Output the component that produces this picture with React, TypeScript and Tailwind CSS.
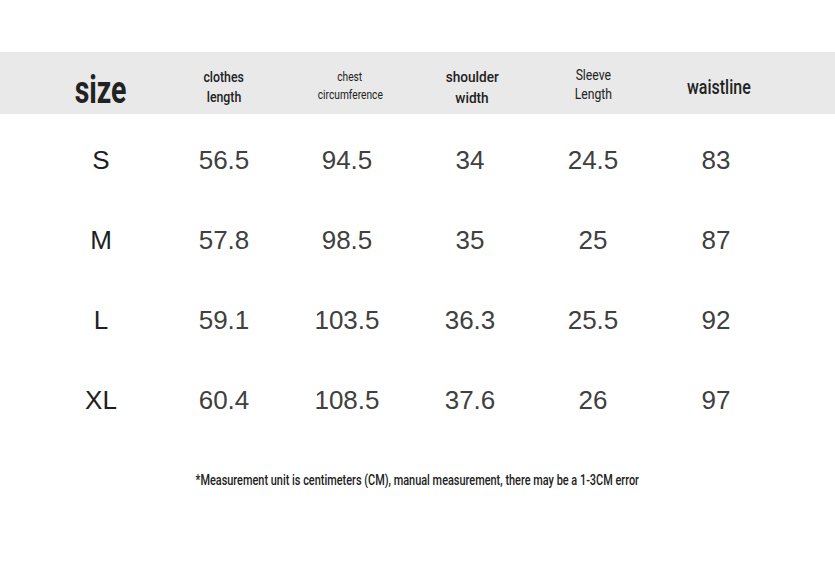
const headers = [
  { lines: ["size"], cls: "pt-[19px] text-[38px] font-bold leading-[38px]", sc: "scale-x-[0.75]" },
  { lines: ["clothes", "length"], cls: "pt-[15px] text-[15px] font-medium leading-[20px]", sc: "scale-x-[0.82]" },
  { lines: ["chest", "circumference"], cls: "pt-[16px] pl-[6px] text-[12px] leading-[18px]", sc: "scale-x-[0.85]" },
  { lines: ["shoulder", "width"], cls: "pt-[15px] pl-[4px] text-[15.5px] font-medium leading-[21px]", sc: "scale-x-[0.88]" },
  { lines: ["Sleeve", "Length"], cls: "pt-[14px] text-[14px] leading-[19px]", sc: "scale-x-[0.87]" },
  { lines: ["waistline"], cls: "pt-[25px] pl-[6px] text-[20px] font-medium leading-[20px]", sc: "scale-x-[0.8]" },
];

const rows = [
  ["S", "56.5", "94.5", "34", "24.5", "83"],
  ["M", "57.8", "98.5", "35", "25", "87"],
  ["L", "59.1", "103.5", "36.3", "25.5", "92"],
  ["XL", "60.4", "108.5", "37.6", "26", "97"],
];

export default function App() {
  return (
    <div className="w-[835px] h-[585px] bg-white flex flex-col pt-[52px]">
      {/* header band */}
      <div className="h-[62px] bg-[#e9e9e9] pl-[39.5px] grid grid-cols-[123px_123px_123px_123px_123px_123px] items-start">
        {headers.map((h, i) => (
          <div
            key={i}
            className={`font-['Roboto',sans-serif] ${h.cls} text-[#222222] text-center flex flex-col items-center`}
          >
            {h.lines.map((l) => (
              <span key={l} className={`inline-block whitespace-nowrap ${h.sc}`}>
                {l}
              </span>
            ))}
          </div>
        ))}
      </div>

      {/* body rows */}
      <div className="pt-[6px] pl-[39.5px] flex flex-col">
        {rows.map((r) => (
          <div key={r[0]} className="h-[80px] grid grid-cols-[123px_123px_123px_123px_123px_123px] items-center">
            {r.map((v, i) => (
              <div
                key={i}
                className={`text-center font-['Liberation_Sans',Arial,sans-serif] text-[26px] ${
                  i === 0 ? "text-[#1e1e1e]" : "text-[#404040]"
                }`}
              >
                {v}
              </div>
            ))}
          </div>
        ))}
      </div>

      <div className="mt-[30px] flex justify-center">
        <p className="inline-block whitespace-nowrap scale-x-[0.78] font-['Roboto',sans-serif] font-medium text-[14px] leading-[20px] text-[#222222]">
          *Measurement unit is centimeters (CM), manual measurement, there may be a 1-3CM error
        </p>
      </div>
    </div>
  );
}
